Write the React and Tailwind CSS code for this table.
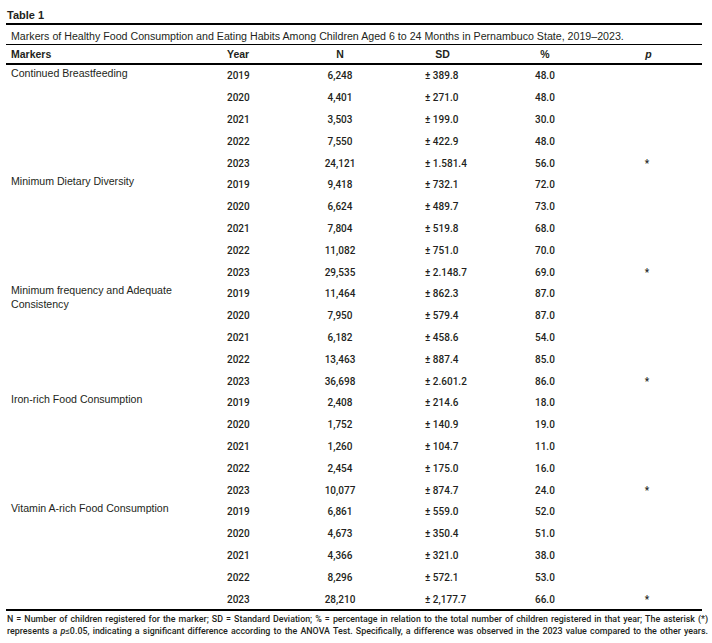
import React from "react";

const groups = [
  {
    label: "Continued Breastfeeding",
    rows: [
      ["2019", "6,248", "± 389.8", "48.0", ""],
      ["2020", "4,401", "± 271.0", "48.0", ""],
      ["2021", "3,503", "± 199.0", "30.0", ""],
      ["2022", "7,550", "± 422.9", "48.0", ""],
      ["2023", "24,121", "± 1.581.4", "56.0", "*"],
    ],
  },
  {
    label: "Minimum Dietary Diversity",
    rows: [
      ["2019", "9,418", "± 732.1", "72.0", ""],
      ["2020", "6,624", "± 489.7", "73.0", ""],
      ["2021", "7,804", "± 519.8", "68.0", ""],
      ["2022", "11,082", "± 751.0", "70.0", ""],
      ["2023", "29,535", "± 2.148.7", "69.0", "*"],
    ],
  },
  {
    label: "Minimum frequency and Adequate Consistency",
    rows: [
      ["2019", "11,464", "± 862.3", "87.0", ""],
      ["2020", "7,950", "± 579.4", "87.0", ""],
      ["2021", "6,182", "± 458.6", "54.0", ""],
      ["2022", "13,463", "± 887.4", "85.0", ""],
      ["2023", "36,698", "± 2.601.2", "86.0", "*"],
    ],
  },
  {
    label: "Iron-rich Food Consumption",
    rows: [
      ["2019", "2,408", "± 214.6", "18.0", ""],
      ["2020", "1,752", "± 140.9", "19.0", ""],
      ["2021", "1,260", "± 104.7", "11.0", ""],
      ["2022", "2,454", "± 175.0", "16.0", ""],
      ["2023", "10,077", "± 874.7", "24.0", "*"],
    ],
  },
  {
    label: "Vitamin A-rich Food Consumption",
    rows: [
      ["2019", "6,861", "± 559.0", "52.0", ""],
      ["2020", "4,673", "± 350.4", "51.0", ""],
      ["2021", "4,366", "± 321.0", "38.0", ""],
      ["2022", "8,296", "± 572.1", "53.0", ""],
      ["2023", "28,210", "± 2,177.7", "66.0", "*"],
    ],
  },
];

export default function App() {
  return (
    <div className="w-[712px] h-[643px] bg-white text-[#231f20] font-['Liberation_Sans',Arial,sans-serif] overflow-hidden">
      <div className="h-[23px] pt-[8px] pl-[7px] text-[11px] leading-[14px] font-bold">Table 1</div>
      <div className="ml-[6px] w-[696px]">
        <div className="h-[1.5px] bg-black" />
        <div className="h-[19px] pt-[4px] pl-[5px] text-[10.65px] leading-[14px]">
          Markers of Healthy Food Consumption and Eating Habits Among Children Aged 6 to 24 Months in Pernambuco State, 2019–2023.
        </div>
        <div className="h-[1.5px] bg-black" />
        <div className="h-[18px] pt-[2px] grid grid-cols-[215px_69px_100px_105px_100px_107px] text-[10.5px] leading-[14px] font-bold">
          <div className="pl-[5px]">Markers</div>
          <div className="pl-[6px]">Year</div>
          <div className="text-center">N</div>
          <div className="text-center">SD</div>
          <div className="text-center">%</div>
          <div className="text-center italic">p</div>
        </div>
        <div className="h-[1.5px] bg-black" />
        {groups.map((g) => (
          <div key={g.label} className="flex">
            <div className="w-[215px] pl-[5px] pr-[40px] pt-[1px] text-[10.6px] leading-[14px]">{g.label}</div>
            <div className="flex-1 flex flex-col">
              {g.rows.map((r, i) => (
                <div
                  key={i}
                  className="h-[21.8px] grid grid-cols-[69px_100px_105px_100px_107px] items-center font-['Roboto',sans-serif] font-medium text-[10px] leading-[12px]"
                >
                  <div className="pl-[6px] pt-[2px]">{r[0]}</div>
                  <div className="text-center pt-[2px]">{r[1]}</div>
                  <div className="pl-[35px] pt-[2px]">{r[2]}</div>
                  <div className="pl-[40px] pt-[2px]">{r[3]}</div>
                  <div className="text-center pr-[3px] pt-[2px]">{r[4]}</div>
                </div>
              ))}
            </div>
          </div>
        ))}
        <div className="h-[1.5px] bg-black" />
      </div>
      <div className="ml-[7px] w-[701px] pt-[2px] text-[8.9px] leading-[12px] font-['Roboto',sans-serif] font-medium">
        <div className="text-justify [text-align-last:justify]">
          N = Number of children registered for the marker; SD = Standard Deviation; % = percentage in relation to the total number of children registered in that year; The asterisk (*)
        </div>
        <div className="text-justify [text-align-last:justify]">
          represents a <i>p</i>≤0.05, indicating a significant difference according to the ANOVA Test. Specifically, a difference was observed in the 2023 value compared to the other years.
        </div>
      </div>
    </div>
  );
}
